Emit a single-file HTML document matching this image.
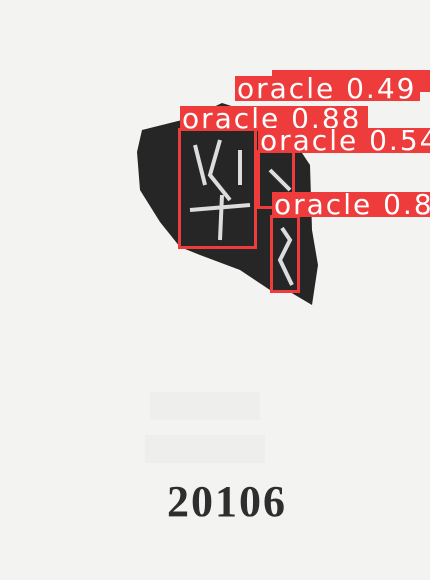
<!DOCTYPE html>
<html><head><style>
html,body{margin:0;padding:0}
body{width:430px;height:580px;background:#f3f3f2;position:relative;overflow:hidden;font-family:"DejaVu Sans",sans-serif}
.lab{position:absolute;background:#ee3b3b;color:#fff;font-size:28px;line-height:25px;height:25px;padding-left:2px;white-space:nowrap;overflow:hidden;letter-spacing:2px}
.box{position:absolute;border:3px solid #ee3b3b;box-sizing:border-box}
.num{position:absolute;left:167px;top:476px;font-family:"Liberation Serif",serif;font-weight:bold;font-size:44px;color:#2e2e2e;letter-spacing:2px}
</style></head><body>
<svg width="430" height="580" style="position:absolute;left:0;top:0">
<polygon points="137,152 142,130 190,118 222,103 260,115 300,150 310,165 312,230 318,265 312,305 290,292 270,290 240,270 200,255 180,247 160,222 140,190" fill="#262626"/>
<g stroke="#ddd" stroke-width="4" fill="none">
<path d="M195,145 L205,185 M220,140 L210,175 L230,200 M190,210 L250,205 M222,195 L220,240 M240,150 L240,185"/>
<path d="M282,228 L290,240 L280,260 L292,285 M270,170 L290,190"/>
</g>
<g fill="#ebebea" opacity="0.6">
<rect x="150" y="392" width="110" height="28"/>
<rect x="145" y="435" width="120" height="28"/>
</g>
</svg>
<div class="box" style="left:178px;top:128px;width:79px;height:121px"></div>
<div class="box" style="left:257px;top:150px;width:38px;height:59px"></div>
<div class="box" style="left:270px;top:215px;width:30px;height:78px"></div>
<div class="lab" style="left:272px;top:70px;width:158px;height:22px"></div>
<div class="lab" style="left:235px;top:76px;width:183px">oracle 0.49</div>
<div class="lab" style="left:180px;top:106px;width:186px">oracle 0.88</div>
<div class="lab" style="left:258px;top:128px;width:172px">oracle 0.54</div>
<div class="lab" style="left:272px;top:192px;width:158px">oracle 0.8</div>
<div class="num">20106</div>
</body></html>
